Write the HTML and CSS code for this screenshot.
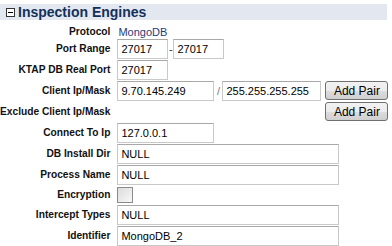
FILE: index.html
```html
<!DOCTYPE html>
<html>
<head>
<meta charset="utf-8">
<link rel="stylesheet" href="styles.css">
</head>
<body>
<div class="panel">
  <div class="header">
    <span class="toggle"><svg width="9" height="9" viewBox="0 0 9 9"><rect x="0.5" y="0.5" width="8" height="8" fill="#fff" stroke="#333"/><line x1="2" y1="4.5" x2="7" y2="4.5" stroke="#000"/></svg></span>
    <span class="title">Inspection Engines</span>
  </div>
  <table class="form">
    <tr class="r-proto"><td class="lbl">Protocol</td><td class="val"><span class="text">MongoDB</span></td></tr>
    <tr><td class="lbl">Port Range</td><td class="val"><span class="inp w50">27017</span><span class="sep">-</span><span class="inp w50">27017</span></td></tr>
    <tr><td class="lbl">KTAP DB Real Port</td><td class="val"><span class="inp w50">27017</span></td></tr>
    <tr><td class="lbl">Client Ip/Mask</td><td class="val"><span class="inp w96">9.70.145.249</span><span class="sep slash">/</span><span class="inp w98">255.255.255.255</span><button class="btn">Add Pair</button></td></tr>
    <tr><td class="lbl">Exclude Client Ip/Mask</td><td class="val"><span class="spacer"></span><button class="btn">Add Pair</button></td></tr>
    <tr><td class="lbl">Connect To Ip</td><td class="val"><span class="inp w96">127.0.0.1</span></td></tr>
    <tr><td class="lbl">DB Install Dir</td><td class="val"><span class="inp w220">NULL</span></td></tr>
    <tr><td class="lbl">Process Name</td><td class="val"><span class="inp w220">NULL</span></td></tr>
    <tr class="r-chk"><td class="lbl">Encryption</td><td class="val"><span class="chk"></span></td></tr>
    <tr><td class="lbl">Intercept Types</td><td class="val"><span class="inp w220">NULL</span></td></tr>
    <tr><td class="lbl">Identifier</td><td class="val"><span class="inp w220">MongoDB_2</span></td></tr>
  </table>
</div>
</body>
</html>
```
FILE: styles.css
```css
html, body { margin: 0; padding: 0; background: #fff; }
body { font-family: "Liberation Sans", Arial, sans-serif; font-size: 11px; color: #000; }
.panel { padding-top: 4px; width: 387px; }
.header { height: 16px; background: #e3e8f0; display: flex; align-items: center; padding-left: 6px; }
.toggle { display: flex; width: 9px; height: 9px; margin-right: 3px; }
.title { font-weight: bold; font-size: 14px; color: #14305a; line-height: 16px; }
.form { border-collapse: collapse; margin-top: 4px; table-layout: fixed; }
.form td { padding: 0; height: 21px; vertical-align: middle; }
.lbl { box-sizing: border-box; font-weight: bold; font-size: 10.2px; text-align: right; width: 113px; padding-right: 3px !important; white-space: nowrap; color: #111; }
.val { padding-left: 4px !important; white-space: nowrap; width: 275px; }
.val > * { vertical-align: middle; }
.r-proto td { height: 14px; }
.r-chk td { height: 19px; }
.text { color: #1f3a7a; font-size: 11px; padding-left: 1px; }
.inp { display: inline-block; box-sizing: border-box; height: 20px; line-height: 18px; border: 1px solid #c9c9c9; border-top-color: #a8a8a8; padding-left: 3px; font-size: 11px; color: #000; background: #fff; }
.w50 { width: 51px; }
.w96 { width: 97px; }
.w98 { width: 99px; }
.w220 { width: 222px; }
.sep { display: inline-block; width: 5px; text-align: center; color: #333; }
.slash { width: 8px; color: #777; }
.spacer { display: inline-block; width: 204px; }
.btn { box-sizing: border-box; width: 63px; height: 19px; margin-left: 4px; padding: 0; font-family: "Liberation Sans", Arial, sans-serif; font-size: 12px; color: #000; border: 1px solid #707070; border-radius: 3px; background: linear-gradient(#f2f2f2, #ebebeb 50%, #dddddd 51%, #cfcfcf); }
.chk { display: inline-block; box-sizing: border-box; width: 16px; height: 16px; border: 1px solid #8a8a8a; background: linear-gradient(135deg, #dcdcdc, #f8f8f8); }
```
